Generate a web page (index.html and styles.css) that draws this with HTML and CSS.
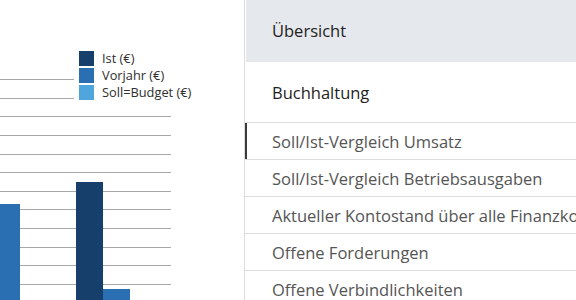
FILE: index.html
```html
<!DOCTYPE html>
<html lang="de">
<head>
<meta charset="utf-8">
<title>Übersicht</title>
<link rel="stylesheet" href="styles.css">
</head>
<body>
<div class="page">
  <section class="chart">
    <svg class="plot" width="244" height="300" viewBox="0 0 244 300">
      <g class="grid" stroke="#a8a8a8" stroke-width="1">
        <line x1="0" x2="171" y1="79.5" y2="79.5"/>
        <line x1="0" x2="171" y1="98.5" y2="98.5"/>
        <line x1="0" x2="171" y1="116.5" y2="116.5"/>
        <line x1="0" x2="171" y1="135.5" y2="135.5"/>
        <line x1="0" x2="171" y1="154.5" y2="154.5"/>
        <line x1="0" x2="171" y1="172.5" y2="172.5"/>
        <line x1="0" x2="171" y1="191.5" y2="191.5"/>
        <line x1="0" x2="171" y1="209.5" y2="209.5"/>
        <line x1="0" x2="171" y1="228.5" y2="228.5"/>
        <line x1="0" x2="171" y1="247.5" y2="247.5"/>
        <line x1="0" x2="171" y1="265.5" y2="265.5"/>
        <line x1="0" x2="171" y1="284.5" y2="284.5"/>
      </g>
      <rect x="0" y="204" width="20" height="96" fill="#2a6fb2"/>
      <rect x="76" y="182" width="27" height="118" fill="#173f6b"/>
      <rect x="103" y="289" width="27" height="11" fill="#2a6fb2"/>
    </svg>
    <ul class="legend">
      <li><span class="swatch ist"></span>Ist (€)</li>
      <li><span class="swatch vorjahr"></span>Vorjahr (€)</li>
      <li><span class="swatch soll"></span>Soll=Budget (€)</li>
    </ul>
  </section>
  <nav class="menu">
    <div class="menu-head">Übersicht</div>
    <div class="menu-group">Buchhaltung</div>
    <div class="menu-item active">Soll/Ist-Vergleich Umsatz</div>
    <div class="menu-item">Soll/Ist-Vergleich Betriebsausgaben</div>
    <div class="menu-item">Aktueller Kontostand über alle Finanzkonten</div>
    <div class="menu-item">Offene Forderungen</div>
    <div class="menu-item">Offene Verbindlichkeiten</div>
  </nav>
</div>
</body>
</html>
```
FILE: styles.css
```css
html, body {
  margin: 0;
  padding: 0;
  background: #ffffff;
  overflow: hidden;
}
.page {
  display: flex;
  width: 576px;
  height: 300px;
  overflow: hidden;
  font-family: "Open Sans", "Noto Sans", sans-serif;
}
.chart {
  position: relative;
  flex: 0 0 244px;
  height: 300px;
}
.plot {
  display: block;
}
.legend {
  position: absolute;
  left: 74px;
  top: 47px;
  margin: 0;
  padding: 4px 6px 4px 5px;
  list-style: none;
  background: #ffffff;
  display: flex;
  flex-direction: column;
  gap: 2px;
  font-size: 12.8px;
  color: #2e2e2e;
}
.legend li {
  display: flex;
  align-items: center;
  gap: 8px;
  height: 15px;
  line-height: 15px;
  white-space: nowrap;
}
.swatch {
  width: 15px;
  height: 15px;
  flex: 0 0 15px;
}
.swatch.ist { background: #173f6b; }
.swatch.vorjahr { background: #2a6fb2; }
.swatch.soll { background: #4ea6dd; }

.menu {
  flex: 1;
  border-left: 1px solid #dcdcdc;
  min-width: 0;
}
.menu-head {
  margin-left: 1px;
  height: 61px;
  border-bottom: 1px solid #e6e6e6;
  background: #e5e8ec;
  display: flex;
  align-items: center;
  padding-left: 26px;
  font-size: 16.5px;
  color: #222222;
  white-space: nowrap;
}
.menu-group {
  height: 60px;
  border-bottom: 1px solid #dddddd;
  display: flex;
  align-items: center;
  padding-left: 27px;
  font-size: 16.5px;
  color: #1e1e1e;
  white-space: nowrap;
}
.menu-item {
  position: relative;
  height: 36px;
  border-bottom: 1px solid #dddddd;
  display: flex;
  align-items: center;
  padding-left: 27px;
  font-size: 16.5px;
  color: #555555;
  white-space: nowrap;
  overflow: hidden;
}
.menu-item.active::before {
  content: "";
  position: absolute;
  left: -1px;
  top: 0;
  bottom: 0;
  width: 3px;
  background: #3a3a3a;
}
```
